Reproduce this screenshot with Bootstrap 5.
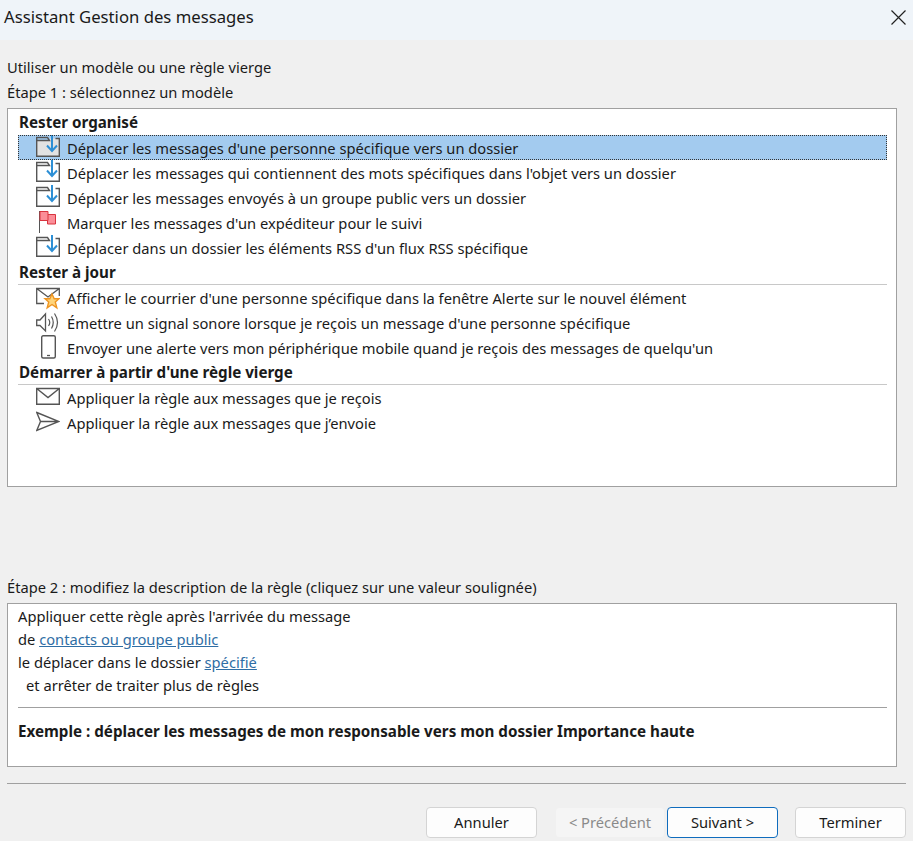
<!DOCTYPE html>
<html lang="fr">
<head>
    <meta charset="UTF-8">
    <meta name="viewport" content="width=device-width, initial-scale=1.0">
    <title>Assistant Gestion des messages</title>
    <link rel="stylesheet" href="https://cdn.jsdelivr.net/npm/bootstrap@5.3.0/dist/css/bootstrap.min.css">
    <style>
        body { background: #f0f0f0; color: #1a1a1a; font-family: "Noto Sans", "Liberation Sans", sans-serif; font-size: 14.7px; overflow: hidden; }
        .title-bar { height: 40px; background: #eff4f9; padding: 0 7px 6px 4px; font-size: 16.7px; }
        .close-x { background: none; border: 0; padding: 0; width: 15px; height: 15px; line-height: 0; }
        .wizard-body { padding: 15px 7px 0; }
        .step-label { height: 25px; line-height: 25px; }
        .rule-box { background: #fff; border: 1px solid #a0a0a0; margin-right: 9px; padding-left: 10px; padding-right: 9px; }
        .templates { height: 379px; margin-top: 3px; padding-top: 1px; }
        .group-head { height: 25px; line-height: 25px; font-size: 15.2px; font-weight: 700; padding-left: 1px; border-bottom: 1px solid #c8c8c8; }
        .group-head.first { border-bottom: 0; }
        .tpl-row { height: 25px; gap: 7px; padding-left: 18px; }
        .tpl-row.selected { background: #a3cbef; outline: 1px dotted #333; outline-offset: -1px; }
        .tpl-row svg { flex: none; }
        .tpl-row span { position: relative; top: 1px; }
        .step2 { margin-top: 88px; }
        .description { height: 164px; margin-top: 3px; padding-top: 1px; }
        .description div { height: 23px; line-height: 23px; }
        .description a { color: #2f6ea5; }
        .description hr { margin: 10px 0 12px; border-top: 1px solid #a0a0a0; opacity: 1; }
        .description .indented { padding-left: 8px; }
        .description .fw-bold { font-size: 15.2px; }
        .bottom-line { margin: 16px 0 23px; border-top: 1px solid #a0a0a0; opacity: 1; }
        .wiz-btn { width: 111px; height: 31px; padding: 0; font-size: 14.7px; line-height: 29px; background: #fdfdfd; border: 1px solid #d4d4d4; border-radius: 4px; color: #1a1a1a; }
        .wiz-btn:disabled { width: 110px; background: #f5f5f5; border-color: #f0f0f0; color: #8a8a8a; opacity: 1; }
        .wiz-btn.current { border-color: #0f6cbd; }
        .gap-prev { margin-left: 18px; }
        .gap-next { margin-left: 2px; }
        .gap-end { margin-left: 17px; }
    </style>
</head>
<body>
    <svg width="0" height="0" class="position-absolute">
        <defs>
            <symbol id="i-move" viewBox="0 0 24 25">
                <path d="M.7 5.5H14V3.5H23.3V21.3H.7Z" fill="var(--folder, #fff)"/>
                <path d="M.7 5.5V2.5H11.5L13.5 5.5H.7V21.3H23.3V3.5H19.5" fill="none" stroke="#555" stroke-width="1.4"/>
                <path d="M16 0V16M11 10.5L16 16L21 10.5" fill="none" stroke="#2d8fd5" stroke-width="2"/>
            </symbol>
        </defs>
    </svg>
    <div class="title-bar d-flex align-items-center justify-content-between">
        <span>Assistant Gestion des messages</span>
        <button class="close-x" type="button" aria-label="Fermer">
            <svg width="15" height="15" viewBox="0 0 15 15"><path d="M.5.5L14.5 14.5M14.5.5L.5 14.5" stroke="#222" stroke-width="1.2"/></svg>
        </button>
    </div>

    <div class="wizard-body">
        <div class="step-label">Utiliser un modèle ou une règle vierge</div>
        <div class="step-label">Étape 1 : sélectionnez un modèle</div>

        <div class="rule-box templates">
            <div class="group-head first">Rester organisé</div>
            <div class="tpl-row selected d-flex align-items-center">
                <svg width="24" height="25" style="--folder:#e2e2e2"><use href="#i-move"/></svg>
                <span>Déplacer les messages d'une personne spécifique vers un dossier</span>
            </div>
            <div class="tpl-row d-flex align-items-center">
                <svg width="24" height="25"><use href="#i-move"/></svg>
                <span>Déplacer les messages qui contiennent des mots spécifiques dans l'objet vers un dossier</span>
            </div>
            <div class="tpl-row d-flex align-items-center">
                <svg width="24" height="25"><use href="#i-move"/></svg>
                <span>Déplacer les messages envoyés à un groupe public vers un dossier</span>
            </div>
            <div class="tpl-row d-flex align-items-center">
                <svg width="24" height="25" viewBox="0 0 24 25">
                    <path d="M3.5 1V23" stroke="#555" stroke-width="1"/>
                    <path d="M11.5 4.5H19.5V14H11.5Z" fill="#fb8e98" stroke="#d8343f"/>
                    <path d="M4 1.5H12V10.5H4Z" fill="#fb8e98" stroke="#d8343f"/>
                </svg>
                <span>Marquer les messages d'un expéditeur pour le suivi</span>
            </div>
            <div class="tpl-row d-flex align-items-center">
                <svg width="24" height="25"><use href="#i-move"/></svg>
                <span>Déplacer dans un dossier les éléments RSS d'un flux RSS spécifique</span>
            </div>

            <div class="group-head">Rester à jour</div>
            <div class="tpl-row d-flex align-items-center">
                <svg width="24" height="25" viewBox="0 0 24 25">
                    <path d="M8 18.5H.7V3.5H23.3V11M.7 3.5L12 12L23.3 3.5" fill="none" stroke="#555" stroke-width="1.3"/>
                    <path d="M16 9L18.2 13.7H23L19.3 17L20.8 22.8L16 19.5L11.2 22.8L12.7 17L9 13.7H13.8Z" fill="#ffd47a" stroke="#ee9420" stroke-width="1.4"/>
                </svg>
                <span>Afficher le courrier d'une personne spécifique dans la fenêtre Alerte sur le nouvel élément</span>
            </div>
            <div class="tpl-row d-flex align-items-center">
                <svg width="24" height="25" viewBox="0 0 24 25">
                    <path d="M.7 10H4L9.5 4V21L4 15.5H.7Z" fill="#fff" stroke="#555" stroke-width="1.3"/>
                    <path d="M12.5 9Q15 12.5 12.5 16M15.5 6.5Q19 12.5 15.5 18.5M18.5 3.5Q24.5 12.5 18.5 21.5" fill="none" stroke="#555" stroke-width="1.2"/>
                </svg>
                <span>Émettre un signal sonore lorsque je reçois un message d'une personne spécifique</span>
            </div>
            <div class="tpl-row d-flex align-items-center">
                <svg width="24" height="25" viewBox="0 0 24 25">
                    <rect x="5.7" y=".7" width="13.6" height="22.3" rx="1.5" fill="#fff" stroke="#555" stroke-width="1.4"/>
                    <path d="M11 20.5H14" stroke="#555" stroke-width="1.3"/>
                </svg>
                <span>Envoyer une alerte vers mon périphérique mobile quand je reçois des messages de quelqu'un</span>
            </div>

            <div class="group-head">Démarrer à partir d'une règle vierge</div>
            <div class="tpl-row d-flex align-items-center">
                <svg width="24" height="25" viewBox="0 0 24 25">
                    <path d="M.7 3.5H23.3V19.3H.7ZM.7 3.5L12 12.5L23.3 3.5" fill="#fff" stroke="#555" stroke-width="1.4"/>
                </svg>
                <span>Appliquer la règle aux messages que je reçois</span>
            </div>
            <div class="tpl-row d-flex align-items-center">
                <svg width="24" height="25" viewBox="0 0 24 25">
                    <path d="M.8 2.5L23 11.5L.8 20.5L4.5 11.5ZM4.5 11.5H23" fill="#fff" stroke="#555" stroke-width="1.4"/>
                </svg>
                <span>Appliquer la règle aux messages que j’envoie</span>
            </div>
        </div>

        <div class="step-label step2">Étape 2 : modifiez la description de la règle (cliquez sur une valeur soulignée)</div>
        <div class="rule-box description">
            <div>Appliquer cette règle après l'arrivée du message</div>
            <div>de <a href="#">contacts ou groupe public</a></div>
            <div>le déplacer dans le dossier <a href="#">spécifié</a></div>
            <div class="indented">et arrêter de traiter plus de règles</div>
            <hr>
            <div class="fw-bold">Exemple : déplacer les messages de mon responsable vers mon dossier Importance haute</div>
        </div>

        <hr class="bottom-line">
        <div class="d-flex justify-content-end">
            <button class="btn wiz-btn" type="button">Annuler</button>
            <button class="btn wiz-btn gap-prev" type="button" disabled>&lt; Précédent</button>
            <button class="btn wiz-btn current gap-next" type="button">Suivant &gt;</button>
            <button class="btn wiz-btn gap-end" type="button">Terminer</button>
        </div>
    </div>

    <script src="https://cdn.jsdelivr.net/npm/bootstrap@5.3.0/dist/js/bootstrap.bundle.min.js"></script>
</body>
</html>
